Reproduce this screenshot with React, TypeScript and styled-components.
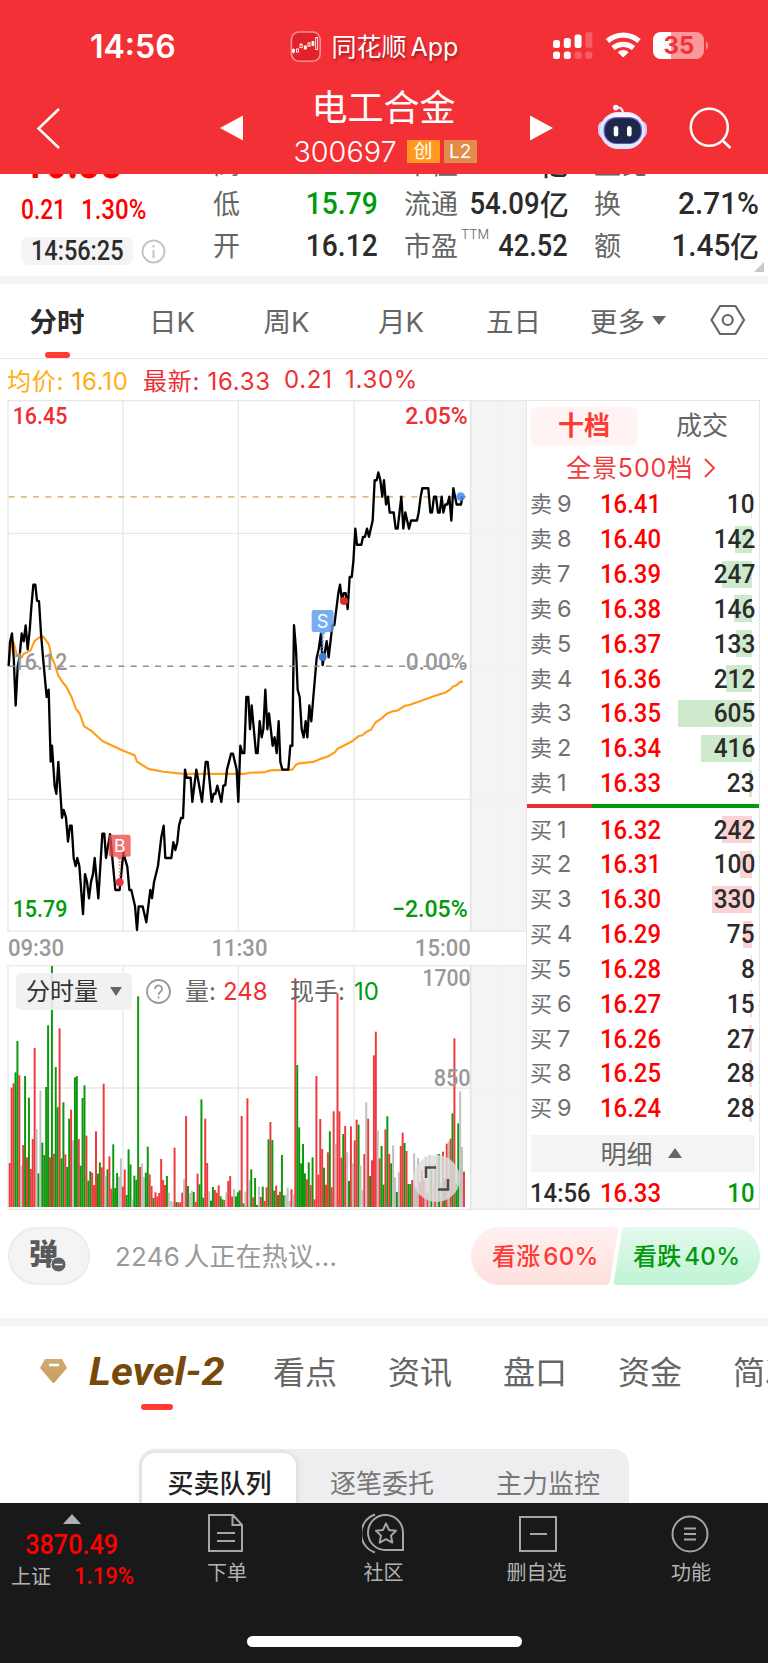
import React from 'react';
import styled, { createGlobalStyle } from 'styled-components';

const CJK = `Inter, "Noto Sans CJK SC", sans-serif`;
const HAN = `"Noto Sans CJK SC", sans-serif`;
const DIN = `Roboto, "Noto Sans CJK SC", sans-serif`;

const Global = createGlobalStyle`
  * { box-sizing: border-box; }
  body { margin: 0; background: #fff; font-family: ${CJK}; color: #666; }
  svg { display: block; flex: none; }
`;

const Screen = styled.div`
  width: 768px;
  height: 1663px;
  overflow: hidden;
  display: flex;
  flex-direction: column;
  background: #fff;
`;

const Num = styled.span<{ $size: number; $s?: number; $c?: string; $w?: number; $o?: string }>`
  display: inline-block;
  font-family: ${DIN};
  font-size: ${p => p.$size}px;
  font-weight: ${p => p.$w ?? 500};
  line-height: 1;
  color: ${p => p.$c ?? '#2b2b2b'};
  transform: scaleX(${p => p.$s ?? 0.88});
  transform-origin: ${p => p.$o ?? 'left'} center;
  white-space: nowrap;
`;

/* ---------- header ---------- */
const Header = styled.header`
  flex: none;
  height: 174px;
  background: #f43037;
  color: #fff;
`;
const StatusBar = styled.div`
  height: 86px;
  padding: 31px 56px 0 90px;
  display: flex;
  align-items: flex-start;
`;
const Clock = styled.div`
  width: 200px;
  height: 31px;
  line-height: 31px;
  font-size: 32px;
  font-weight: 600;
`;
const AppName = styled.div`
  margin-left: 11px;
  width: 221px;
  line-height: 32px;
  font-size: 25px;
  word-spacing: -3px;
  text-shadow: 1px 2px 3px rgba(90, 0, 0, 0.55);
  white-space: nowrap;
`;
const StatusIcons = styled.div`
  display: flex;
  padding-top: 1px;
`;
const NavBar = styled.div`
  height: 88px;
  display: flex;
`;
const NavCell = styled.div<{ $w: number; $t?: number }>`
  width: ${p => p.$w}px;
  padding-top: ${p => p.$t ?? 0}px;
`;
const TitleBlock = styled.div`
  width: 264px;
  display: flex;
  flex-direction: column;
  align-items: center;
`;
const StockName = styled.div`
  font-family: ${HAN};
  font-size: 36px;
  line-height: 38px;
  margin-right: 3px;
`;
const CodeRow = styled.div`
  display: flex;
  align-items: center;
  height: 24px;
  margin-top: 15px;
  font-size: 28.8px;
  font-weight: 350;
`;
const Tag = styled.span<{ $bg: string }>`
  width: 33px;
  height: 23px;
  margin-left: 4px;
  background: ${p => p.$bg};
  font-size: 19px;
  font-weight: 400;
  line-height: 23px;
  text-align: center;
  &:first-of-type { margin-left: 10px; }
`;

/* ---------- quote panel ---------- */
const Quote = styled.section`
  flex: none;
  height: 102px;
  overflow: hidden;
  display: flex;
  position: relative;
`;
const QuoteMain = styled.div`
  width: 192px;
  padding-left: 21px;
`;
const BigPrice = styled.div`
  height: 23px;
  margin-top: -39px;
  margin-left: 2px;
  margin-bottom: 39px;
`;
const ChangeRow = styled.div`
  height: 28px;
  display: flex;
`;
const TimeRow = styled.div`
  margin-top: 12px;
  display: flex;
  align-items: center;
  gap: 8px;
`;
const TimePill = styled.div`
  width: 112px;
  height: 28px;
  padding: 1px 0 0 10px;
  border-radius: 8px;
  background: #f4f4f4;
`;
const QuoteCol = styled.div<{ $l: number; $w: number }>`
  margin-left: ${p => p.$l}px;
  width: ${p => p.$w}px;
  margin-top: -34px;
`;
const QuoteRow = styled.div`
  height: 42px;
  display: flex;
  justify-content: space-between;
  align-items: center;
  font-family: ${HAN};
  font-size: 27px;
  line-height: 42px;
  white-space: nowrap;
  &:first-child { padding-top: 4px; }
`;
const QuoteLabel = styled.span`
  display: flex;
  margin-right: -16px;
`;
const Sup = styled.sup`
  font: 300 13px/1 ${CJK};
  margin: 4px 0 0 3px;
`;
const QuoteVal = styled.span`
  display: flex;
  align-items: center;
  color: #2b2b2b;
  font-size: 29px;
  font-weight: 500;
`;
const Corner = styled.i`
  position: absolute;
  right: 4px;
  bottom: 4px;
  border-left: 10px solid transparent;
  border-bottom: 10px solid #c8c8c8;
`;
const Band = styled.div`
  flex: none;
  height: 8px;
  background: #f4f4f4;
`;

/* ---------- period tabs ---------- */
const Periods = styled.nav`
  flex: none;
  height: 75px;
  display: grid;
  grid-template-columns: 115px 115px 114px 115px 110px 119px 80px;
  border-bottom: 1px solid #e6e6e6;
`;
const Period = styled.div<{ $on?: boolean }>`
  display: flex;
  justify-content: center;
  align-items: center;
  gap: 7px;
  padding: 0 1px 2px 0;
  position: relative;
  font-size: 27.5px;
  font-weight: ${p => (p.$on ? 700 : 400)};
  color: ${p => (p.$on ? '#2b2b2b' : '#666')};
  ${p => p.$on && `&::after { content: ''; position: absolute; left: 45px; bottom: 0; width: 25px; height: 6px; border-radius: 3px; background: #ff3b33; }`}
`;
const Down = styled.i<{ $w: number; $h: number; $up?: boolean }>`
  border: solid transparent;
  border-width: 0 ${p => p.$w / 2}px;
  ${p => (p.$up ? 'border-bottom' : 'border-top')}: ${p => p.$h}px solid #666;
`;
const AvgRow = styled.div`
  flex: none;
  height: 41px;
  padding: 0 0 1px 7px;
  display: flex;
  align-items: center;
  font-size: 24px;
  letter-spacing: 0.7px;
  color: #ee3034;
`;
const AvgItem = styled.span<{ $w: number; $c?: string }>`
  width: ${p => p.$w}px;
  white-space: pre;
  color: ${p => p.$c};
`;

/* ---------- charts and order book ---------- */
const Market = styled.main`
  flex: none;
  height: 810px;
  display: flex;
`;
const Charts = styled.div`
  width: 526px;
`;
const Axis = styled.div`
  height: 33px;
  padding: 4px 55px 0 8px;
  display: flex;
  justify-content: space-between;
`;
const VolumeBox = styled.div`
  position: relative;
  height: 245px;
`;
const VolumeHead = styled.div`
  position: absolute;
  left: 16px;
  top: 8px;
  height: 37px;
  display: flex;
  align-items: center;
  font-size: 24px;
  line-height: 37px;
  white-space: pre;
`;
const VolumePill = styled.div`
  width: 116px;
  height: 37px;
  padding: 0 10px 0 10px;
  display: flex;
  justify-content: space-between;
  align-items: center;
  border-radius: 5px;
  background: rgba(240, 240, 240, 0.9);
  color: #333;
  margin-right: 14px;
`;
const VolText = styled.span<{ $w: number; $l: number; $c?: string }>`
  width: ${p => p.$w}px;
  margin-left: ${p => p.$l}px;
  color: ${p => p.$c ?? '#666'};
`;
const Expand = styled.div`
  position: absolute;
  left: 413px;
  top: 190px;
  width: 47px;
  height: 47px;
  border-radius: 50%;
  background: rgba(222, 222, 222, 0.82);
`;

const Book = styled.aside`
  width: 234px;
  border: 1px solid #e6e6e6;
  border-width: 1px 1px 2px 1px;
  padding-top: 6px;
`;
const BookTabs = styled.div`
  display: flex;
  height: 39px;
  padding-left: 4px;
`;
const BookTab = styled.div<{ $on?: boolean }>`
  flex: none;
  width: ${p => (p.$on ? 106 : 122)}px;
  padding-left: ${p => (p.$on ? 0 : 8)}px;
  border-radius: 5px;
  text-align: center;
  font: ${p => (p.$on ? 700 : 400)} 26px/34px ${HAN};
  color: ${p => (p.$on ? '#ff3b33' : '#666')};
  background: ${p => (p.$on ? '#fff3f3' : 'none')};
`;
const Panorama = styled.div`
  height: 41px;
  padding: 2px 0 0 39px;
  display: flex;
  align-items: center;
  gap: 11px;
  font-size: 25px;
  letter-spacing: 0.9px;
  line-height: 38px;
  color: #f03a3c;
  white-space: nowrap;
`;
const Level = styled.div<{ $h: number }>`
  height: ${p => p.$h}px;
  padding: 0 4px 0 3px;
  display: grid;
  grid-template-columns: 27px 43px 62px 1fr;
  align-items: center;
  font-size: 22px;
  line-height: 30px;
  color: #707070;
  > span:nth-child(2) { font-size: 23.5px; }
`;
const Qty = styled.div<{ $c: string }>`
  position: relative;
  height: 27px;
  display: flex;
  justify-content: flex-end;
  align-items: center;
  i {
    position: absolute;
    right: 3px;
    top: 0;
    height: 27px;
    background: ${p => p.$c};
  }
`;
const Ratio = styled.div`
  height: 4.5px;
  margin: 3px 0 4px;
  display: flex;
  background: #009a0c;
  &::before { content: ''; width: 65px; background: #ec2f33; }
`;
const DetailBtn = styled.div`
  height: 37px;
  margin: 9px 4px 3px;
  padding-right: 4px;
  display: flex;
  justify-content: center;
  align-items: center;
  gap: 15px;
  font: 400 26px/34px ${HAN};
  background: #f4f4f4;
`;
const Tick = styled.div`
  height: 36px;
  padding: 0 4px 0 3px;
  display: grid;
  grid-template-columns: 70px 1fr 40px;
  align-items: center;
`;

/* ---------- discussion ---------- */
const Talk = styled.section`
  flex: none;
  height: 108px;
  padding: 17px 8px 0;
  display: flex;
`;
const Danmu = styled.div`
  position: relative;
  width: 82px;
  height: 58px;
  padding-left: 19px;
  border: 2px solid #ececec;
  border-radius: 29px;
  background: #f4f4f4;
  font: 900 29px/47px ${HAN};
  color: #5a5a5a;
  svg { position: absolute; left: 40px; top: 27px; }
`;
const Hot = styled.div`
  width: 356px;
  margin-left: 25px;
  font-size: 25.8px;
  letter-spacing: 0.3px;
  word-spacing: -4px;
  line-height: 59px;
  color: #999;
`;
const Votes = styled.div`
  position: relative;
  width: 289px;
  height: 58px;
  color: #ff3b33;
  svg { position: absolute; inset: 0; }
`;
const VoteLabels = styled.div`
  position: relative;
  padding-left: 21px;
  display: flex;
  font-size: 24px;
  font-weight: 500;
  line-height: 59px;
  word-spacing: -4px;
  white-space: nowrap;
  span { flex: none; width: 141px; letter-spacing: 0.3px; }
  span + span { color: #009a0c; }
`;

/* ---------- content tabs ---------- */
const Topics = styled.nav`
  flex: none;
  height: 84px;
  padding-left: 39px;
  display: flex;
  font: 400 32px/88px ${HAN};
  white-space: nowrap;
`;
const Level2 = styled.div`
  flex: none;
  position: relative;
  width: 184px;
  margin-left: 21px;
  font: italic 700 38px/93px Roboto, sans-serif;
  color: #774a0c;
  span { display: inline-block; transform: scaleX(1.1); transform-origin: left; }
  &::after { content: ''; position: absolute; left: 52px; bottom: 0; width: 32px; height: 6px; border-radius: 3px; background: #ff3b33; }
`;
const Topic = styled.span`
  flex: none;
  width: 115px;
`;
const SegmentWrap = styled.div`
  flex: none;
  height: 93px;
  padding-top: 39px;
  overflow: hidden;
  display: flex;
  justify-content: center;
`;
const Segment = styled.div`
  width: 490px;
  height: 72px;
  padding: 4px 3px 0;
  border-radius: 16px;
  background: #eeeef0;
  display: flex;
  font: 400 26px/58px ${HAN};
  color: #777;
`;
const Seg = styled.div<{ $on?: boolean; $w: number }>`
  flex: none;
  width: ${p => p.$w}px;
  height: 64px;
  padding-left: 1px;
  text-align: center;
  border-radius: 13px;
  ${p => p.$on && 'background: #fff; color: #222; font-weight: 500; box-shadow: 0 1px 8px rgba(0,0,0,.12);'}
`;
const Rule = styled.i`
  width: 1px;
  height: 40px;
  margin-top: 11px;
  background: #d2d2d6;
`;

/* ---------- bottom bar ---------- */
const Bottom = styled.footer`
  flex: none;
  height: 160px;
  background: #191919;
  display: flex;
  flex-direction: column;
  align-items: center;
`;
const Actions = styled.div`
  width: 768px;
  height: 133px;
  display: flex;
`;
const Index = styled.div`
  width: 144px;
  padding-top: 11px;
  display: flex;
  flex-direction: column;
  align-items: center;
`;
const IndexValue = styled.div`
  height: 40px;
  padding-top: 7px;
`;
const IndexRow = styled.div`
  width: 144px;
  padding-left: 11px;
  display: flex;
  align-items: center;
  font: 400 20px/24px ${HAN};
  color: #b3b3b3;
`;
const Action = styled.div<{ $w: number }>`
  width: ${p => p.$w}px;
  padding-top: 10px;
  display: flex;
  flex-direction: column;
  align-items: center;
  font: 400 20px/28px ${HAN};
  color: #b3b3b3;
  svg { height: 45px; }
`;
const HomeBar = styled.div`
  width: 275px;
  height: 11px;
  border-radius: 6px;
  background: #fff;
`;

/* Plot coordinates use three units per CSS pixel; the curves are stretched vertically by STRETCH. */
const STRETCH = 'scale(1 1.0523)';
const PRICE =
  '26,773 30,705 36,680 41,745 47,885 53,775 59,745 65,680 71,702 77,657 83,725 89,672 94,605 100,541 106,541 111,586 117,588 123,680 129,748 140,861 146,840 152,1045 156,1000 164,1115 169,1137 175,1046 186,1205 191,1183 198,1205 204,1273 210,1228 215,1228 221,1320 227,1343 232,1320 238,1343 249,1480 255,1366 261,1388 267,1435 273,1388 279,1366 284,1320 295,1435 307,1251 313,1251 318,1320 330,1252 336,1310 346,1411 359,1411 370,1305 382,1345 388,1411 394,1411 405,1457 411,1525 416,1458 428,1458 439,1503 451,1411 456,1434 462,1389 474,1342 484,1260 491,1228 496,1320 514,1320 520,1275 526,1297 532,1275 537,1228 543,1206 549,1206 555,1068 560,1091 572,1091 577,1160 589,1068 606,1160 617,1046 623,1046 635,1160 641,1137 646,1137 652,1114 664,1160 670,1114 676,1112 681,1068 693,1023 699,1023 710,1068 715,1160 721,1000 727,1021 733,1021 739,861 745,861 750,953 755,885 768,1021 773,1021 779,930 785,976 790,953 796,840 802,953 807,908 818,1000 824,976 830,1021 836,930 841,1046 847,1068 865,1068 871,1000 877,1000 882,656 888,725 893,840 899,861 905,953 911,976 917,930 922,976 928,885 934,930 940,861 950,750 956,725 963,680 968,770 980,702 986,748 997,657 1003,656 1015,565 1020,541 1026,586 1031,565 1037,565 1043,610 1049,519 1055,519 1060,475 1066,381 1071,427 1084,427 1089,405 1095,404 1101,381 1107,404 1118,358 1124,243 1130,243 1135,221 1141,243 1147,290 1152,243 1158,312 1164,290 1169,335 1181,335 1187,381 1193,381 1204,290 1210,381 1216,335 1227,381 1233,358 1251,358 1256,335 1262,290 1267,266 1285,266 1291,335 1296,335 1302,290 1308,290 1314,335 1319,335 1325,290 1330,335 1336,312 1342,312 1348,290 1354,358 1360,266 1370,312 1383,312 1387,290';
const AVERAGE =
  '26,773 33,715 41,705 50,740 65,748 71,738 92,728 103,702 118,691 124,687 131,690 147,712 154,745 163,765 175,800 190,822 198,830 215,862 228,895 239,908 252,944 276,959 308,987 370,1014 404,1027 411,1045 445,1066 490,1074 550,1080 733,1080 750,1077 795,1075 812,1070 877,1068 888,1054 898,1050 940,1046 960,1038 985,1030 1005,1018 1012,1009 1055,988 1075,973 1087,970 1100,960 1113,954 1127,933 1145,922 1160,909 1180,901 1192,900 1215,886 1230,883 1310,856 1335,849 1350,840 1358,832 1370,827 1380,818 1389,817';

/* One entry per minute: r = up, g = down, n = flat, then the bar's top edge. */
const VOLUME = (
  'r669 r443 r430 g397 g303 r406 n677 r615 g408 r652 g473 r687 r597 r324 n567 g700 n452 g608 g645 g441 g256 r652 g78 r641 g381 g502 r265 g655 g487 r643 g681 g536 r509 n601 g412 g408 r597 g677 g474 g436 r587 g722 g694 r698 r735 r574 g701 g667 r682 r431 n709 g688 r649 r746 g613 g744 g699 n710 n655 r740 r689 g765 g628 g673 n778 g707 g719 g169 r681 n670 n711 g698 g620 r703 r738 g774 r757 r769 r759 r657 r720 r735 g708 n758 n783 n786 r623 g786 r787 r787 r758 n717 r528 g738 n759 n752 g756 r786 r701 g733 g478 g773 r536 r669 n754 g782 g741 r750 r758 r736 g769 g778 r780 n757 r723 r708 r769 n747 g769 g757 g751 r528 g790 n755 r475 n720 g688 r772 g714 g795 n739 r771 g740 r783 r742 ' +
  'g598 r546 g600 g752 r737 g765 r755 g645 g766 n765 n743 n783 r748 n765 r115 g375 g562 g670 g612 g700 r718 g667 r735 g652 r778 r408 r704 r537 r627 g683 r734 r637 g574 r742 r514 n612 r160 r514 r653 g582 r558 n637 g723 r559 n670 r601 r539 g554 n676 n750 r642 n487 r536 g708 r661 r346 r275 n571 r655 g618 g734 r568 g529 r642 g670 n616 n712 g756 n697 r618 r578 g609 r633 g732 g732 r720 n640 n740 n654 r726 r690 r718 n650 r760 n645 g690 n735 r673 n642 g642 n730 r635 g715 r611 n605 r596 g520 r295 g730 g550 n454 n621 r695'
).split(' ');
const VOL_COLOR: Record<string, string> = { r: '#ee3a3d', g: '#0c980c', n: '#c0c0c0' };

const SELL: [number, string, number][] = [
  [9, '16.41', 10], [8, '16.40', 142], [7, '16.39', 247], [6, '16.38', 146], [5, '16.37', 133],
  [4, '16.36', 212], [3, '16.35', 605], [2, '16.34', 416], [1, '16.33', 23],
];
const BUY: [number, string, number][] = [
  [1, '16.32', 242], [2, '16.31', 100], [3, '16.30', 330], [4, '16.29', 75], [5, '16.28', 8],
  [6, '16.27', 15], [7, '16.26', 27], [8, '16.25', 28], [9, '16.24', 28],
];

const chartText = { fontFamily: 'Roboto', fontWeight: 500, fontSize: 71, lengthAdjust: 'spacingAndGlyphs' as const };

function PriceChart() {
  return (
    <svg width="526" height="532" viewBox="0 15 1578 1596">
      <rect x="1413" y="16" width="165" height="1594" fill="#f4f4f4" />
      <path d="M1497 20V1608M1415 416H1578M1415 813H1578M1415 1215H1578" stroke="#e9e9e9" strokeWidth="3" strokeDasharray="5 7" />
      <path d="M23 17H1578M23 1608.500H1578M24 16V1611M369 16V1610M715 16V1610M1062 16V1610M24 415H1410M24 1213H1410" stroke="#e8e8e8" strokeWidth="4" fill="none" />
      <path d="M1412 16V1611" stroke="#e4e4e4" strokeWidth="5" />
      <path d="M26 305.500H1404" stroke="#e0b98a" strokeWidth="5" strokeDasharray="18 18.600" />
      <g transform={STRETCH} fill="none">
        <polyline points={AVERAGE} stroke="#ff9e16" strokeWidth="6.200" strokeLinejoin="round" />
        <polyline points={PRICE} stroke="#000" strokeWidth="7" strokeLinejoin="round" />
      </g>
      <path d="M26 813.500H1404" stroke="#8f8f8f" strokeWidth="4.500" strokeDasharray="18 18.600" />
      <text x="38" y="87" {...chartText} textLength="164" fill="#ee3034">16.45</text>
      <text x="1216" y="87" {...chartText} textLength="187" fill="#ee3034">2.05%</text>
      <text x="38" y="826" {...chartText} textLength="164" fill="#999">16.12</text>
      <text x="1217" y="826" {...chartText} textLength="186" fill="#999">0.00%</text>
      <text x="38" y="1567" {...chartText} textLength="164" fill="#009a0c">15.79</text>
      <text x="1176" y="1567" {...chartText} textLength="227" fill="#009a0c">−2.05%</text>
      <path d="M332 1319h54q6 0 6 6v54q0 6-6 6h-17l-10 11-10-11h-17q-6 0-6-6v-54q0-6 6-6z" fill="#ee4a4d" fillOpacity=".78" />
      <path d="M359 1398V1452" stroke="#f08a8a" strokeWidth="6" strokeDasharray="5 5" />
      <circle cx="359" cy="1462" r="12" fill="#e8383b" />
      <text x="359" y="1371" textAnchor="middle" fontFamily="Inter" fontSize="53" fill="#fff">B</text>
      <path d="M968 714V780" stroke="#4b90ee" strokeWidth="6" strokeDasharray="5 5" />
      <path d="M941 645h54q6 0 6 6v54q0 6-6 6h-17l-10 11-10-11h-17q-6 0-6-6v-54q0-6 6-6z" fill="#5b9bef" fillOpacity=".82" />
      <circle cx="968" cy="786" r="12" fill="#3a80d8" />
      <text x="968" y="698" textAnchor="middle" fontFamily="Inter" fontSize="55" fill="#fff">S</text>
      <circle cx="1032" cy="618" r="12" fill="#e02a2f" />
      <circle cx="1382" cy="305" r="13" fill="#3f8cf0" fillOpacity=".85" />
    </svg>
  );
}

function VolumeChart() {
  return (
    <svg width="526" height="245" viewBox="0 75 1578 735">
      <rect x="1413" y="76" width="165" height="731" fill="#f4f4f4" />
      <path d="M1497 80V806M1415 447H1578" stroke="#e9e9e9" strokeWidth="3" strokeDasharray="5 7" />
      <path d="M23 77H1578M23 808H1578M24 76V810M369 76V808M715 76V808M1062 76V808M24 444H1410" stroke="#e8e8e8" strokeWidth="4" fill="none" />
      <path d="M1412 76V810" stroke="#e4e4e4" strokeWidth="5" />
      {VOLUME.map((v, i) => {
        const top = Number(v.slice(1));
        return <rect key={i} x={26.3 + i * 5.75} y={top} width="5.900" height={801 - top} fill={VOL_COLOR[v[0]]} />;
      })}
      <text x="1267" y="137" {...chartText} textLength="145" fill="#999">1700</text>
      <text x="1301" y="438" {...chartText} textLength="111" fill="#999">850</text>
    </svg>
  );
}

function BookLevel({ side, row, color, h }: { side: string; row: [number, string, number]; color: string; h: number }) {
  return (
    <Level $h={h}>
      <span>{side}</span>
      <span>{row[0]}</span>
      <Num $size={26} $s={0.92} $c="#f00">{row[1]}</Num>
      <Qty $c={color}>
        <i style={{ width: Math.max(1, row[2] * 0.1225) }} />
        <Num $size={26} $s={0.94} $o="right">{row[2]}</Num>
      </Qty>
    </Level>
  );
}

function AppIcon() {
  return (
    <svg width="31" height="32" viewBox="0 0 31 32">
      <rect x="1.400" y="1" width="28.800" height="29.200" rx="7.500" fill="#e2222a" stroke="#f98f92" strokeWidth="1.600" />
      <g stroke="#fff" strokeWidth=".9" fill="none">
        <path d="M3.500 17.500v5" /><rect x="2.500" y="18.500" width="2" height="2.500" fill="#fff" />
        <rect x="6.500" y="18" width="2" height="3" />
        <path d="M11 12v1.500" /><rect x="10" y="13.500" width="2.200" height="3.200" />
        <rect x="14.300" y="15" width="2" height="3" fill="#fff" />
        <path d="M19 11v5" /><rect x="18" y="12" width="2" height="3" fill="#e2222a" />
        <rect x="22" y="10.500" width="1.800" height="4" fill="#fff" />
        <rect x="25.700" y="6.500" width="2" height="12" />
      </g>
    </svg>
  );
}

function Signal() {
  const tops = [8, 6, 2.5, 0];
  return (
    <svg width="160" height="28" viewBox="0 0 160 28">
      {tops.map((t, i) => (
        <g key={i} fill="#fff" opacity={i === 3 ? 0.22 : 1}>
          <rect x={1 + i * 10.8} y={t} width="7" height={16 - t} rx="2.500" />
          <rect x={1 + i * 10.8} y="19.500" width="7" height="7.500" rx="2.500" opacity={i === 2 ? 0.22 : 1} />
        </g>
      ))}
      <g fill="none" stroke="#fff" strokeWidth="5.200">
        <path d="M55.500 9a24 24 0 0 1 31.500 0" />
        <path d="M61 16a16 16 0 0 1 20.500 0" />
      </g>
      <path d="M71.200 25.500l-5.500-5.300a8 8 0 0 1 11 0z" fill="#fff" />
      <rect x="101" y="0" width="51" height="27" rx="8" fill="#fff" fillOpacity=".5" />
      <path d="M109 0h10v27h-10a8 8 0 0 1-8-8v-11a8 8 0 0 1 8-8z" fill="#fff" />
      <path d="M154 9q4 4.500 0 9z" fill="#fff" fillOpacity=".5" />
      <text x="127" y="22" textAnchor="middle" fontFamily="Inter" fontWeight="700" fontSize="24" fill="#f43037">35</text>
    </svg>
  );
}

function Robot() {
  return (
    <svg width="51" height="48" viewBox="0 0 51 48">
      <path d="M19 3.500q6-1 7 5" stroke="#e4e6fb" strokeWidth="2.200" fill="none" />
      <circle cx="18.800" cy="3.600" r="2.800" fill="#eef0fd" />
      <rect x="1" y="17" width="49" height="17" rx="6" fill="#c9cdf3" />
      <rect x="3.200" y="8" width="44.600" height="37" rx="18" fill="#e4e6fa" />
      <ellipse cx="25.500" cy="14" rx="14" ry="5" fill="#f6f7ff" />
      <rect x="6.500" y="13" width="38.500" height="27" rx="12.500" fill="#7a5fe6" />
      <rect x="7.800" y="14.200" width="36" height="25" rx="11.500" fill="#1c2749" />
      <rect x="16.700" y="22" width="4.600" height="10.500" rx="2.300" fill="#fff" />
      <rect x="30" y="22" width="4.600" height="10.500" rx="2.300" fill="#fff" />
    </svg>
  );
}

const ICON = { fill: 'none', stroke: '#a6a6a6', strokeWidth: 2 };

export default function App() {
  return (
    <Screen>
      <Global />
      <Header>
        <StatusBar>
          <Clock>14:56</Clock>
          <AppIcon />
          <AppName>同花顺 App</AppName>
          <StatusIcons><Signal /></StatusIcons>
        </StatusBar>
        <NavBar>
          <NavCell $w={253} $t={2}>
            <svg width="253" height="86">
              <path d="M59 21L38.500 40.500L59 60" fill="none" stroke="#fff" strokeWidth="2.500" />
              <path d="M220 40L243 27.500V52.500z" fill="#fff" />
            </svg>
          </NavCell>
          <TitleBlock>
            <StockName>电工合金</StockName>
            <CodeRow>300697<Tag $bg="#ff9a1f">创</Tag><Tag $bg="#e28c4a">L2</Tag></CodeRow>
          </TitleBlock>
          <NavCell $w={80} $t={2}>
            <svg width="80" height="86"><path d="M36 40L13 27.500V52.500z" fill="#fff" /></svg>
          </NavCell>
          <NavCell $w={91} $t={18}><Robot /></NavCell>
          <NavCell $w={80} $t={2}>
            <svg width="80" height="86">
              <circle cx="21.300" cy="39.300" r="18.500" fill="none" stroke="#fff" strokeWidth="2.500" />
              <path d="M34 52l8.500 8" stroke="#fff" strokeWidth="2.500" />
            </svg>
          </NavCell>
        </NavBar>
      </Header>

      <Quote>
        <QuoteMain>
          <BigPrice><Num $size={52} $s={0.74} $w={700} $c="#f00">16.33</Num></BigPrice>
          <ChangeRow>
            <NavCell $w={60}><Num $size={27} $s={0.84} $c="#f00">0.21</Num></NavCell>
            <Num $size={27} $s={0.89} $c="#f00">1.30%</Num>
          </ChangeRow>
          <TimeRow>
            <TimePill><Num $size={27} $s={0.87}>14:56:25</Num></TimePill>
            <svg width="25" height="25" viewBox="0 0 25 25" fill="none" stroke="#c4c4c4" strokeWidth="2">
              <circle cx="12.500" cy="12.500" r="11" /><path d="M12.500 11v8M12.500 6v2.500" />
            </svg>
          </TimeRow>
        </QuoteMain>
        <QuoteCol $l={21} $w={165}>
          <QuoteRow>高<Num $size={32} $o="right">16.37</Num></QuoteRow>
          <QuoteRow>低<Num $size={32} $o="right" $c="#009a0c">15.79</Num></QuoteRow>
          <QuoteRow>开<Num $size={32} $o="right">16.12</Num></QuoteRow>
        </QuoteCol>
        <QuoteCol $l={26} $w={164}>
          <QuoteRow>市值<QuoteVal><Num $size={32} $o="right">70.10</Num>亿</QuoteVal></QuoteRow>
          <QuoteRow>流通<QuoteVal><Num $size={32} $s={0.86} $o="right">54.09</Num>亿</QuoteVal></QuoteRow>
          <QuoteRow><QuoteLabel>市盈<Sup>TTM</Sup></QuoteLabel><Num $size={32} $s={0.85} $o="right">42.52</Num></QuoteRow>
        </QuoteCol>
        <QuoteCol $l={26} $w={165}>
          <QuoteRow>量比<Num $size={32} $o="right">1.02</Num></QuoteRow>
          <QuoteRow>换<Num $size={32} $s={0.93} $o="right">2.71%</Num></QuoteRow>
          <QuoteRow>额<QuoteVal><Num $size={32} $s={0.93} $o="right">1.45</Num>亿</QuoteVal></QuoteRow>
        </QuoteCol>
        <Corner />
      </Quote>
      <Band />

      <Periods>
        <Period $on>分时</Period>
        <Period>日K</Period>
        <Period>周K</Period>
        <Period>月K</Period>
        <Period>五日</Period>
        <Period>更多<Down $w={14} $h={9} /></Period>
        <Period>
          <svg width="36" height="32" viewBox="0 0 36 32" fill="none" stroke="#666" strokeWidth="2.200">
            <path d="M10 2h15.500L34 16l-8.500 14H10L1.500 16z" strokeLinejoin="round" /><circle cx="17.700" cy="16" r="5" />
          </svg>
        </Period>
      </Periods>
      <AvgRow>
        <AvgItem $w={136} $c="#ffae12">均价: 16.10</AvgItem>
        <AvgItem $w={141}>最新: 16.33</AvgItem>
        <AvgItem $w={61}>0.21</AvgItem>
        <AvgItem $w={80}>1.30%</AvgItem>
      </AvgRow>

      <Market>
        <Charts>
          <PriceChart />
          <Axis>
            <Num $size={24} $s={0.92} $c="#999">09:30</Num>
            <Num $size={24} $s={0.92} $c="#999" $o="center">11:30</Num>
            <Num $size={24} $s={0.92} $c="#999" $o="right">15:00</Num>
          </Axis>
          <VolumeBox>
            <VolumeChart />
            <VolumeHead>
              <VolumePill>分时量<Down $w={13} $h={9} /></VolumePill>
              <svg width="25" height="25" viewBox="0 0 25 25" fill="none" stroke="#999" strokeWidth="1.800">
                <circle cx="12.500" cy="12.500" r="11.500" />
                <path d="M9 10a3.500 3.500 0 1 1 5.500 2.800q-2 1.200-2 3M12.500 17.500v2" />
              </svg>
              <VolText $w={38} $l={14}>量:</VolText>
              <VolText $w={67} $l={0} $c="#ee3034">248</VolText>
              <VolText $w={64} $l={0}>现手:</VolText>
              <VolText $w={40} $l={0} $c="#009a0c">10</VolText>
            </VolumeHead>
            <Expand>
              <svg width="47" height="47" fill="none" stroke="#4a4a4a" strokeWidth="2.500">
                <path d="M13 23V12.500H23M35 24V34.500H25" />
              </svg>
            </Expand>
          </VolumeBox>
        </Charts>
        <Book>
          <BookTabs><BookTab $on>十档</BookTab><BookTab>成交</BookTab></BookTabs>
          <Panorama>
            全景500档
            <svg width="12" height="20" fill="none" stroke="#f03a3c" strokeWidth="1.800"><path d="M1 1l9 9-9 9" /></svg>
          </Panorama>
          {SELL.map(r => <BookLevel key={r[0]} side="卖" row={r} color="#cdeacd" h={34.85} />)}
          <Ratio />
          {BUY.map(r => <BookLevel key={r[0]} side="买" row={r} color="#fbd3d5" h={34.85} />)}
          <DetailBtn>明细<Down $w={14} $h={10} $up /></DetailBtn>
          <Tick>
            <Num $size={26} $s={0.92}>14:56</Num>
            <Num $size={26} $s={0.92} $c="#f00">16.33</Num>
            <Qty $c="none"><Num $size={26} $s={0.92} $c="#009a0c" $o="right">10</Num></Qty>
          </Tick>
        </Book>
      </Market>

      <Talk>
        <Danmu>
          弹
          <svg width="17" height="17"><circle cx="8.500" cy="8.500" r="7.500" fill="#606060" stroke="#f4f4f4" /><path d="M4.500 8.500h8" stroke="#fff" strokeWidth="1.500" /></svg>
        </Danmu>
        <Hot>2246 人正在热议...</Hot>
        <Votes>
          <svg width="289" height="58">
            <defs>
              <linearGradient id="up" x1="0" y1="0" x2="0" y2="1"><stop offset="0" stopColor="#fff1f0" /><stop offset="1" stopColor="#fee0de" /></linearGradient>
              <linearGradient id="down" x1="0" y1="0" x2="0" y2="1"><stop offset="0" stopColor="#e4faec" /><stop offset="1" stopColor="#bff3d3" /></linearGradient>
            </defs>
            <path d="M29 0H144q4 0 3 4L139 54q-1 4-5 4H29a29 29 0 0 1 0-58z" fill="url(#up)" />
            <path d="M156 0H260a29 29 0 0 1 0 58H146q-4 0-3-4L151 4q1-4 5-4z" fill="url(#down)" />
          </svg>
          <VoteLabels><span>看涨 60%</span><span>看跌 40%</span></VoteLabels>
        </Votes>
      </Talk>
      <Band />

      <Topics>
        <svg width="29" height="62" viewBox="0 0 29 62">
          <defs><linearGradient id="gem" x1="0" y1="0" x2="0" y2="1"><stop offset="0" stopColor="#d0aa74" /><stop offset="1" stopColor="#c99d5f" /></linearGradient></defs>
          <path d="M6 33H23L28 42L15.500 56.500q-1 1-2 0L1 42z" fill="url(#gem)" /><path d="M10 39h10" stroke="#fff" strokeWidth="2.500" />
        </svg>
        <Level2><span>Level-2</span></Level2>
        <Topic>看点</Topic><Topic>资讯</Topic><Topic>盘口</Topic><Topic>资金</Topic><Topic>简况</Topic>
      </Topics>
      <SegmentWrap>
        <Segment>
          <Seg $on $w={154}>买卖队列</Seg>
          <Seg $w={171}>逐笔委托</Seg>
          <Rule />
          <Seg $w={161}>主力监控</Seg>
        </Segment>
      </SegmentWrap>

      <Bottom>
        <Actions>
          <Index>
            <svg width="18" height="10"><path d="M0 10L9 0L18 10z" fill="#b0b0b0" /></svg>
            <IndexValue><Num $size={28} $s={0.9} $o="center" $c="#f00">3870.49</Num></IndexValue>
            <IndexRow><NavCell $w={63}>上证</NavCell><Num $size={24} $s={0.92} $c="#f00">1.19%</Num></IndexRow>
          </Index>
          <Action $w={166}>
            <svg width="38" height="45" viewBox="1 0 38 45" {...ICON}><path d="M2 2H26L35 12V38H2zM25.500 2V12H35M10 20H28M10 28H28" /></svg>
            下单
          </Action>
          <Action $w={147}>
            <svg width="44" height="45" viewBox="1 0 44 45" {...ICON}>
              <path d="M42 20V37H25A17.500 17.500 0 1 1 42 20zM14 1.500A20 20 0 0 0 14 39.500" />
              <path d="M25 10.500l3 6.400 7 .8-5 4.900 1.300 7L25 26.200 18.700 29.600 20 22.600l-5-4.900 7-.8z" strokeLinejoin="round" />
            </svg>
            社区
          </Action>
          <Action $w={159}>
            <svg width="40" height="45" viewBox="-1 0 40 45" {...ICON}><path d="M2 4H38V38H2zM12 21H29" /></svg>
            删自选
          </Action>
          <Action $w={150}>
            <svg width="40" height="45" viewBox="1 0 40 45" {...ICON}><circle cx="20" cy="21" r="17.500" /><path d="M14 15.500H26M14 21H26M14 26.500H26" /></svg>
            功能
          </Action>
        </Actions>
        <HomeBar />
      </Bottom>
    </Screen>
  );
}
